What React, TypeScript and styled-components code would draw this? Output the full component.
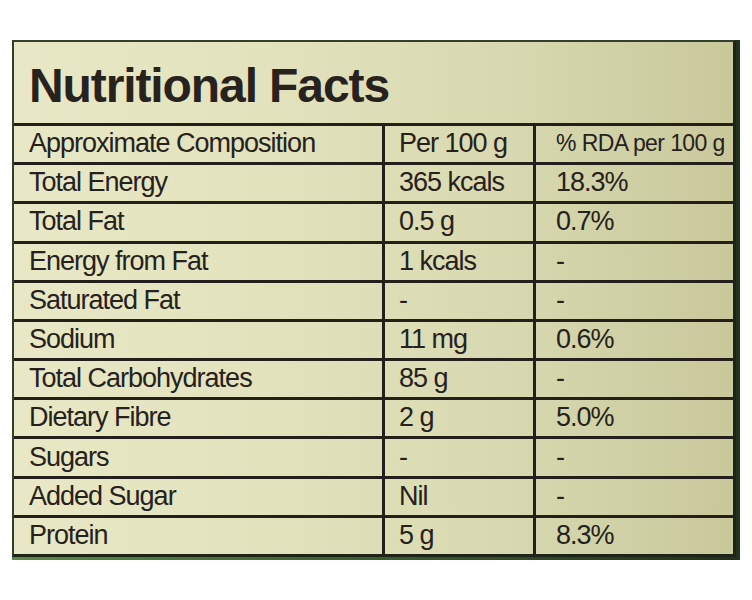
import React from "react";
import styled, { createGlobalStyle } from "styled-components";

const GlobalStyle = createGlobalStyle`
  body {
    margin: 0;
    background: #ffffff;
    font-family: "Liberation Sans", Arial, sans-serif;
  }
`;

const Frame = styled.div`
  margin: 40px 0 0 12px;
  width: 728px;
  height: 520px;
  box-sizing: border-box;
  padding: 0 4px 3px 0;
  background: linear-gradient(90deg, #5a8a45 0%, #3e6232 45%, #23301b 100%);
`;

const Label = styled.div`
  height: 100%;
  box-sizing: border-box;
  border: 2px solid #34402c;
  border-right-width: 3px;
  border-bottom-width: 3px;
  border-right-color: #1c2416;
  border-bottom-color: #1e2418;
  background: linear-gradient(
    90deg,
    #e8e8c6 0%,
    #e2e2bd 35%,
    #d8d8b0 70%,
    #c8c89b 100%
  );
  color: #26211d;
  display: flex;
  flex-direction: column;
`;

const Title = styled.h1`
  margin: 0;
  height: 81px;
  box-sizing: border-box;
  padding: 20px 0 0 15px;
  font-size: 48px;
  line-height: 1;
  font-weight: 700;
  letter-spacing: -1.1px;
  color: #28221e;
`;

const Table = styled.div`
  flex: 1;
  display: grid;
  grid-template-columns: 368px 151px 1fr;
  grid-auto-rows: 1fr;
`;

const Cell = styled.div<{ $col: number; $small?: boolean }>`
  display: flex;
  align-items: center;
  box-sizing: border-box;
  border-top: 3px solid #241f1b;
  border-left: ${(p) => (p.$col > 0 ? "3px solid #241f1b" : "none")};
  padding: 0 0 1px ${(p) => (p.$col === 0 ? 15 : p.$col === 1 ? 14 : 20)}px;
  font-size: ${(p) => (p.$small ? 23 : 27)}px;
  letter-spacing: ${(p) => (p.$small ? -0.6 : -1)}px;
  line-height: 1;
  white-space: nowrap;
`;

const rows: [string, string, string][] = [
  ["Total Energy", "365 kcals", "18.3%"],
  ["Total Fat", "0.5 g", "0.7%"],
  ["Energy from Fat", "1 kcals", "-"],
  ["Saturated Fat", "-", "-"],
  ["Sodium", "11 mg", "0.6%"],
  ["Total Carbohydrates", "85 g", "-"],
  ["Dietary Fibre", "2 g", "5.0%"],
  ["Sugars", "-", "-"],
  ["Added Sugar", "Nil", "-"],
  ["Protein", "5 g", "8.3%"],
];

const App: React.FC = () => {
  return (
    <>
      <GlobalStyle />
      <Frame>
        <Label>
          <Title>Nutritional Facts</Title>
          <Table>
            <Cell $col={0}>Approximate Composition</Cell>
            <Cell $col={1}>Per 100 g</Cell>
            <Cell $col={2} $small>
              % RDA per 100 g
            </Cell>
            {rows.map(([name, amount, rda]) => (
              <React.Fragment key={name}>
                <Cell $col={0}>{name}</Cell>
                <Cell $col={1}>{amount}</Cell>
                <Cell $col={2}>{rda}</Cell>
              </React.Fragment>
            ))}
          </Table>
        </Label>
      </Frame>
    </>
  );
};

export default App;
